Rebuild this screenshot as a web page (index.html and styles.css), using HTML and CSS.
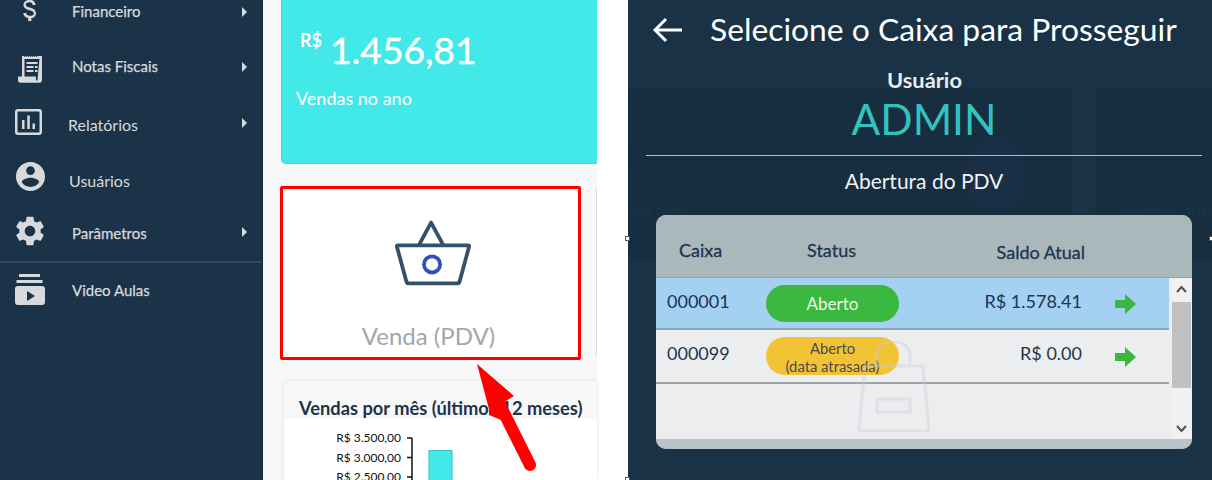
FILE: index.html
```html
<!DOCTYPE html>
<html lang="pt-BR">
<head>
<meta charset="utf-8">
<title>Selecione o Caixa</title>
<link rel="stylesheet" href="styles.css">
</head>
<body>
<div class="page">
  <nav class="sidebar">
    <div class="item item-fin">
      <span class="icon"><svg class="ic-dollar" viewBox="0 0 24 24"><path d="M11.8 10.9c-2.27-.59-3-1.2-3-2.15 0-1.09 1.01-1.85 2.7-1.85 1.78 0 2.44.85 2.5 2.1h2.21c-.07-1.72-1.12-3.3-3.21-3.81V3h-2.4v2.16c-1.94.42-3.5 1.68-3.5 3.61 0 2.31 1.91 3.46 4.7 4.13 2.5.6 3 1.48 3 2.41 0 .69-.49 1.79-2.7 1.79-2.06 0-2.87-.92-2.98-2.1h-2.2c.12 2.19 1.76 3.42 3.68 3.83V21h2.4v-2.15c1.95-.37 3.5-1.5 3.5-3.55 0-2.84-2.43-3.81-4.7-4.4z"/></svg></span>
      <span class="label">Financeiro</span><span class="caret"></span>
    </div>
    <div class="item item-nf">
      <span class="icon"><svg class="ic-receipt" viewBox="0 0 26 28"><path d="M5 1h1.5l1 1 1-1 1 1 1-1 1 1 1-1 1 1 1-1 1 1 1-1 1 1 1-1 1 1 1-1H25v24a3 3 0 0 1-2 2.8H3.500A2.600 2.600 0 0 1 1 25v-2.500a1 1 0 0 1 1-1h3zM7.500 4v17.500H18a1 1 0 0 1 1 1V25a.8.8 0 0 0 1.500 0L22.500 4z"/><path d="M9.500 7h11v2h-11zM9.500 11h7v2h-7zM18 11h2.500v2H18zM9.500 15h7v2h-7zM18 15h2.500v2H18z"/></svg></span>
      <span class="label">Notas Fiscais</span><span class="caret"></span>
    </div>
    <div class="item item-rel">
      <span class="icon"><svg class="ic-chart" viewBox="0 0 27 26"><path d="M3 0h21a3 3 0 0 1 3 3v20a3 3 0 0 1-3 3H3a3 3 0 0 1-3-3V3a3 3 0 0 1 3-3zm0 2.500a.5.5 0 0 0-.5.5v20a.5.5 0 0 0 .5.500h21a.5.5 0 0 0 .5-.5V3a.5.5 0 0 0-.5-.5z"/><path d="M7 11h2.500v9H7zM12.300 6.500h2.500V20h-2.500zM17.500 14.500H20V20h-2.500z"/></svg></span>
      <span class="label">Relatórios</span><span class="caret"></span>
    </div>
    <div class="item item-usr">
      <span class="icon"><svg class="ic-user" viewBox="2 2 20 20"><path d="M12 2C6.480 2 2 6.480 2 12s4.480 10 10 10 10-4.480 10-10S17.520 2 12 2zm0 3c1.660 0 3 1.340 3 3s-1.340 3-3 3-3-1.340-3-3 1.340-3 3-3zm0 14.200c-2.500 0-4.710-1.280-6-3.220.03-1.990 4-3.080 6-3.080 1.990 0 5.970 1.090 6 3.080-1.290 1.940-3.500 3.220-6 3.220z"/></svg></span>
      <span class="label">Usuários</span>
    </div>
    <div class="item item-par">
      <span class="icon"><svg class="ic-gear" viewBox="2.500 2 19 20"><path d="M19.140 12.940c.04-.3.06-.61.06-.94 0-.32-.02-.64-.07-.94l2.030-1.580c.18-.14.23-.41.12-.61l-1.920-3.320c-.12-.22-.37-.29-.59-.22l-2.390.96c-.5-.38-1.030-.7-1.620-.94l-.36-2.540c-.04-.24-.24-.41-.48-.41h-3.840c-.24 0-.43.17-.47.41l-.36 2.540c-.59.24-1.130.57-1.620.94l-2.390-.96c-.22-.08-.47 0-.59.22L2.740 8.870c-.12.21-.08.47.12.61l2.030 1.580c-.05.3-.09.63-.09.94s.02.64.07.94l-2.030 1.580c-.18.14-.23.41-.12.61l1.920 3.320c.12.22.37.29.59.22l2.390-.96c.5.38 1.030.7 1.620.94l.36 2.540c.05.24.24.41.48.41h3.840c.24 0 .44-.17.47-.41l.36-2.540c.59-.24 1.130-.56 1.620-.94l2.390.96c.22.08.47 0 .59-.22l1.920-3.320c.12-.22.07-.47-.12-.61l-2.010-1.580zM12 15.600c-1.980 0-3.600-1.620-3.600-3.600s1.620-3.600 3.600-3.600 3.600 1.620 3.600 3.600-1.620 3.600-3.600 3.600z"/></svg></span>
      <span class="label">Parâmetros</span><span class="caret"></span>
    </div>
    <div class="nav-divider"></div>
    <div class="item item-vid">
      <span class="icon"><svg class="ic-video" viewBox="0 0 30 31"><path d="M4 0h21v3H4zM1.500 6h26v3h-26z"/><path d="M3 12h24a3 3 0 0 1 3 3v13a3 3 0 0 1-3 3H3a3 3 0 0 1-3-3V15a3 3 0 0 1 3-3zm9 5v10l8-5z"/></svg></span>
      <span class="label">Video Aulas</span>
    </div>
  </nav>

  <main class="main">
    <section class="stat">
      <div class="stat-value"><span class="currency">R$</span><span class="amount">1.456,81</span></div>
      <div class="stat-label">Vendas no ano</div>
    </section>
    <div class="shortcut-row">
      <a class="shortcut">
        <svg class="basket" viewBox="0 0 80 70"><path class="basket-line" d="M25 27 38 3l13 24M3 27h74a1 1 0 0 1 1 1.300L68 65a3 3 0 0 1-3 2H15a3 3 0 0 1-3-2L2 28.300A1 1 0 0 1 3 27z"/><circle class="basket-dot" cx="39" cy="47" r="8.500"/></svg>
        <span class="shortcut-label">Venda (PDV)</span>
      </a>
      <div class="next-card"></div>
    </div>
    <section class="chart-card">
      <h2 class="chart-title">Vendas por mês (últimos 12 meses)</h2>
      <svg class="chart" viewBox="0 0 298 61">
        <text class="tick" x="102" y="23" text-anchor="end">R$ 3.500,00</text>
        <text class="tick" x="102" y="43" text-anchor="end">R$ 3.000,00</text>
        <text class="tick" x="102" y="62" text-anchor="end">R$ 2.500,00</text>
        <path class="axis" d="M113 19v42M108 19h5M108 38.500h5M108 58h5"/>
        <rect class="bar" x="130" y="31.500" width="23" height="32"/>
      </svg>
    </section>
    <svg class="annot-arrow" viewBox="0 0 70 110"><path class="annot-head" d="M2 1 39 33 28 40 38 62 14 52 14 46z"/><path class="annot-shaft" d="M24 40 55 102"/></svg>
  </main>

  <div class="gap"></div>

  <section class="modal">
    <div class="ghost ghost-a"><span class="ghost-num ghost-num-a">05,93</span><span class="ghost-circle"></span><span class="ghost-sub ghost-sub-a">no mês</span></div>
    <div class="ghost ghost-b"><span class="ghost-num ghost-num-b"><small>R$</small> 65,</span><span class="ghost-sub ghost-sub-b">Margem bruta</span></div>
    <header class="modal-head">
      <svg class="back" viewBox="0 0 30 26"><path d="M13 2 2 13l11 11M2 13h27"/></svg>
      <h1 class="modal-title">Selecione o Caixa para Prosseguir</h1>
    </header>
    <div class="user-label">Usuário</div>
    <div class="user-name">ADMIN</div>
    <hr class="rule">
    <div class="open-label">Abertura do PDV</div>
    <div class="table">
      <div class="thead">
        <span class="th th-caixa">Caixa</span>
        <span class="th th-status">Status</span>
        <span class="th th-saldo">Saldo Atual</span>
      </div>
      <div class="tbody">
        <div class="rows">
          <div class="row row-on">
            <span class="cell-id">000001</span>
            <span class="pill pill-green">Aberto</span>
            <span class="cell-amt">R$ 1.578.41</span>
            <svg class="go" viewBox="0 0 21 20"><path d="M0 6h10V0l11 10-11 10v-6H0z"/></svg>
          </div>
          <div class="row row-late">
            <span class="cell-id">000099</span>
            <span class="pill pill-yellow">Aberto<br>(data atrasada)</span>
            <span class="cell-amt">R$ 0.00</span>
            <svg class="go" viewBox="0 0 21 20"><path d="M0 6h10V0l11 10-11 10v-6H0z"/></svg>
          </div>
          <svg class="bag" viewBox="0 0 72 91"><path d="M19 25V13a16 12 0 0 1 33 0v12M7 25h58l6 62a3 3 0 0 1-3 3H4a3 3 0 0 1-3-3zM19 58h33v13H19z"/></svg>
        </div>
        <div class="scrollbar">
          <svg class="sb-btn" viewBox="0 0 21 24"><path d="M6 14l4.500-5 4.500 5"/></svg>
          <div class="sb-thumb"></div>
          <svg class="sb-btn" viewBox="0 0 21 22"><path d="M6 9l4.500 5 4.500-5"/></svg>
        </div>
      </div>
      <div class="tfoot"></div>
    </div>
  </section>
  <span class="handle handle-l"></span>
  <span class="handle handle-r"></span>
  <span class="handle handle-b"></span>
</div>
</body>
</html>
```
FILE: styles.css
```css
* { box-sizing: border-box; }
html, body { margin: 0; height: 480px; overflow: hidden; }
body { font-family: Lato, "Open Sans", sans-serif; background: #fff; color: #1a3349; }
.page { position: relative; display: flex; width: 1212px; height: 480px; overflow: hidden; }

/* sidebar */
.sidebar { width: 263px; flex: none; background: #1a3349; border-right: 1px solid #16293b; color: #d7dadc; display: flex; flex-direction: column; }
.item { display: flex; align-items: center; height: 24px; position: relative; font-size: 15px; }
.icon { display: flex; align-items: center; justify-content: center; width: 30px; height: 24px; margin-left: 15px; flex: none; }
.icon svg { fill: #d7dadc; flex: none; }
.label { line-height: 24px; -webkit-text-stroke: .25px #d7dadc; }
.caret { width: 0; height: 0; margin-left: auto; margin-right: 15px; border-left: 5px solid #d7dadc; border-top: 5px solid transparent; border-bottom: 5px solid transparent; }
.item-fin .label, .item-nf .label, .item-par .label, .item-vid .label { margin-left: 27px; }
.item-fin .label, .item-nf .label { margin-top: -2px; }
.item-rel .label { margin-left: 23px; font-size: 16px; -webkit-text-stroke: 0; }
.item-usr .label { margin-left: 24px; font-size: 16px; -webkit-text-stroke: 0; }
.item-nf { margin-top: 31px; }
.item-rel { margin-top: 34px; }
.item-usr { margin-top: 32px; }
.item-par { margin-top: 28px; }
.item-vid { margin-top: 15px; }
.item-rel .caret { margin-top: -4px; }
.item-par .caret { margin-top: -2px; }
.nav-divider { height: 2px; margin-top: 16px; background: #2d4a61; }
.ic-dollar { width: 32px; height: 32px; margin-top: -6px; }
.ic-receipt { width: 26px; height: 28px; margin-top: 3px; }
.ic-chart { width: 27px; height: 26px; margin-left: -3px; margin-top: -6px; }
.ic-user { width: 29px; height: 29px; margin-top: -10px; }
.ic-gear { width: 28px; height: 30px; margin-top: -4px; }
.ic-video { width: 30px; height: 31px; margin-top: -2px; }

/* main */
.main { width: 334px; flex: none; background: #f8f8f8; padding-left: 17px; position: relative; display: flex; flex-direction: column; }
.stat { height: 164px; margin-left: 1px; background: #43e8e8; border-bottom: 1px solid #3fd8dc; border-left: 1px solid #3fd8dc; border-radius: 0 0 0 5px; color: #fff; padding: 25px 0 0 14px; }
.stat-value { display: flex; align-items: flex-start; padding-left: 4px; height: 51px; }
.currency { font-size: 18px; line-height: 20px; font-weight: 700; margin-top: 5px; }
.amount { font-size: 37.200px; line-height: 50px; margin-left: 8px; -webkit-text-stroke: .4px #fff; }
.stat-label { font-size: 18px; line-height: 22px; margin-top: 11px; }
.shortcut-row { display: flex; height: 174px; margin-top: 22px; }
.shortcut { width: 301px; height: 174px; background: #fff; border: 3px solid #f00; border-radius: 2px; display: flex; flex-direction: column; align-items: center; flex: none; }
.basket { width: 76px; height: 70px; margin-top: 29px; margin-left: 5px; fill: none; }
.basket-line { stroke: #35506b; stroke-width: 4; stroke-linejoin: round; fill: none; }
.basket-dot { stroke: #2f54b5; stroke-width: 4; fill: none; }
.shortcut-label { font-size: 24px; line-height: 30px; color: #a3a7ab; margin-top: 33px; margin-left: -4px; }
.next-card { width: 16px; margin-left: 15px; margin-top: 2px; height: 168px; border-left: 1px solid #dcdcdc; background: #f8f8f8; }
.chart-card { margin: 21px 0 0 4px; flex: 1; border-radius: 8px 0 0 0; box-shadow: 0 0 4px rgba(0,0,0,.12); padding: 0 0 0 15px; background: linear-gradient(#f8f8f8 0 38px, #fff 38px); }
.chart-title { margin: 0; font-size: 18.300px; line-height: 22px; font-weight: 700; color: #1f3349; padding-top: 16px; height: 38px; white-space: nowrap; }
.chart { display: block; width: 298px; height: 61px; }
.tick { font-family: Lato, sans-serif; font-size: 12px; fill: #111; }
.axis { stroke: #111; stroke-width: 1.500; fill: none; }
.bar { fill: #43e8e8; stroke: #35c4c4; }
.annot-arrow { position: absolute; left: 212px; top: 363px; width: 70px; height: 110px; overflow: visible; }
.annot-head { fill: #f00; }
.annot-shaft { stroke: #f00; stroke-width: 12; stroke-linecap: round; fill: none; }

.gap { width: 30px; flex: none; background: #fff; }

/* modal */
.modal { position: relative; flex: 1; background: #193246; color: #fff; border-left: 1px solid #fff; overflow: hidden; display: flex; flex-direction: column; align-items: center; }
.modal > * { position: relative; }
.modal > .ghost { position: absolute; top: 88px; height: 170px; background: #162e40; }
.ghost-a { left: 0; width: 444px; border-radius: 0 8px 8px 0; }
.ghost-b { left: 467px; width: 130px; border-radius: 8px 0 0 8px; }
.ghost-num { position: absolute; top: 42px; font-size: 48px; line-height: 56px; color: #182d44; white-space: nowrap; }
.ghost-num small { font-size: 22px; vertical-align: 18px; }
.ghost-num-a { left: 2px; }
.ghost-num-b { left: 20px; }
.ghost-circle { position: absolute; left: 337px; top: 50px; width: 62px; height: 72px; border-radius: 50%; background: #1a2f46; }
.ghost-sub { position: absolute; top: 112px; font-size: 17px; line-height: 22px; color: #1a3347; white-space: nowrap; }
.ghost-sub-a { left: 4px; }
.ghost-sub-b { left: 20px; }
.modal-head { align-self: stretch; display: flex; align-items: center; height: 60px; padding-left: 25px; }
.back { width: 30px; height: 26px; fill: none; stroke: #fff; stroke-width: 3; flex: none; }
.modal-title { margin: -2px 0 0 27px; font-size: 31.800px; line-height: 60px; font-weight: 400; white-space: nowrap; }
.user-label { margin-top: 7px; font-size: 21.800px; line-height: 25px; font-weight: 700; color: #e8ecef; margin-left: 9px; }
.user-name { font-size: 42.500px; line-height: 51px; color: #34c2c0; margin-left: 8px; margin-top: 1px; }
.rule { align-self: flex-start; width: 556px; margin: 11px 0 0 18px; border: 0; height: 1px; background: #b5bcc2; }
.open-label { font-size: 21px; line-height: 25px; margin-top: 12px; margin-left: 8px; color: #f0f2f4; }

/* table */
.table { align-self: flex-start; width: 536px; height: 234px; margin: 22px 0 0 28px; border-radius: 10px; overflow: hidden; background: #bac3c6; color: #1c3550; display: flex; flex-direction: column; }
.thead { display: grid; grid-template-columns: 110px 131px 188px; height: 63px; background: #abb8bb; border-bottom: 1px solid #98a3a6; align-items: center; font-size: 18px; }
.th { -webkit-text-stroke: .3px #1c3550; }
.th-caixa { padding-left: 23px; margin-top: 8px; }
.th-status { text-align: center; margin-top: 8px; }
.th-saldo { text-align: right; margin-top: 12px; }
.tbody { display: flex; height: 161px; background: #ecedef; }
.rows { flex: 1; position: relative; }
.row { display: grid; grid-template-columns: 110px 133px 183px 21px; height: 52px; border-bottom: 2px solid #a0a4a8; align-items: center; background: #ecedef; }
.row-on { background: #a4d0f2; border-bottom-color: #8fa7ba; }
.row-late { height: 54px; }
.cell-id { padding-left: 11px; font-size: 18px; margin-top: -5px; }
.cell-amt { text-align: right; font-size: 18px; margin-top: -5px; }
.row-late .cell-id, .row-late .cell-amt { margin-top: -6px; }
.pill { height: 37px; border-radius: 19px; text-align: center; display: flex; align-items: center; justify-content: center; flex-direction: column; }
.pill-green { background: #3ab83f; color: #eef9ee; font-size: 17px; }
.pill-yellow { background: #f2c335; color: #4a4a50; font-size: 14.800px; line-height: 18px; display: block; height: 38px; padding-top: 2px; }
.go { grid-column: 4; width: 21px; height: 20px; margin: 1px 0 0 33px; fill: #3ab83f; }
.bag { position: absolute; left: 202px; top: 63px; width: 72px; height: 91px; fill: none; stroke: #c9ced6; stroke-width: 3; opacity: .4; }
.scrollbar { width: 21px; flex: none; background: #f1f1f1; display: flex; flex-direction: column; margin-left: 2px; }
.sb-btn { width: 21px; height: 24px; fill: none; stroke: #505050; stroke-width: 2; flex: none; }
.sb-thumb { height: 86px; background: #c1c1c1; margin: 0 1px; }
.sb-btn:last-child { margin-top: auto; height: 22px; }
.tfoot { flex: 1; background: #b9c2c7; }

/* resize handles of the pasted crop */
.handle { position: absolute; width: 5px; height: 5px; background: #fff; border: 1px solid #555; }
.handle-l { left: 625px; top: 236px; }
.handle-r { left: 1209px; top: 236px; }
.handle-b { left: 625px; top: 477px; }
```
